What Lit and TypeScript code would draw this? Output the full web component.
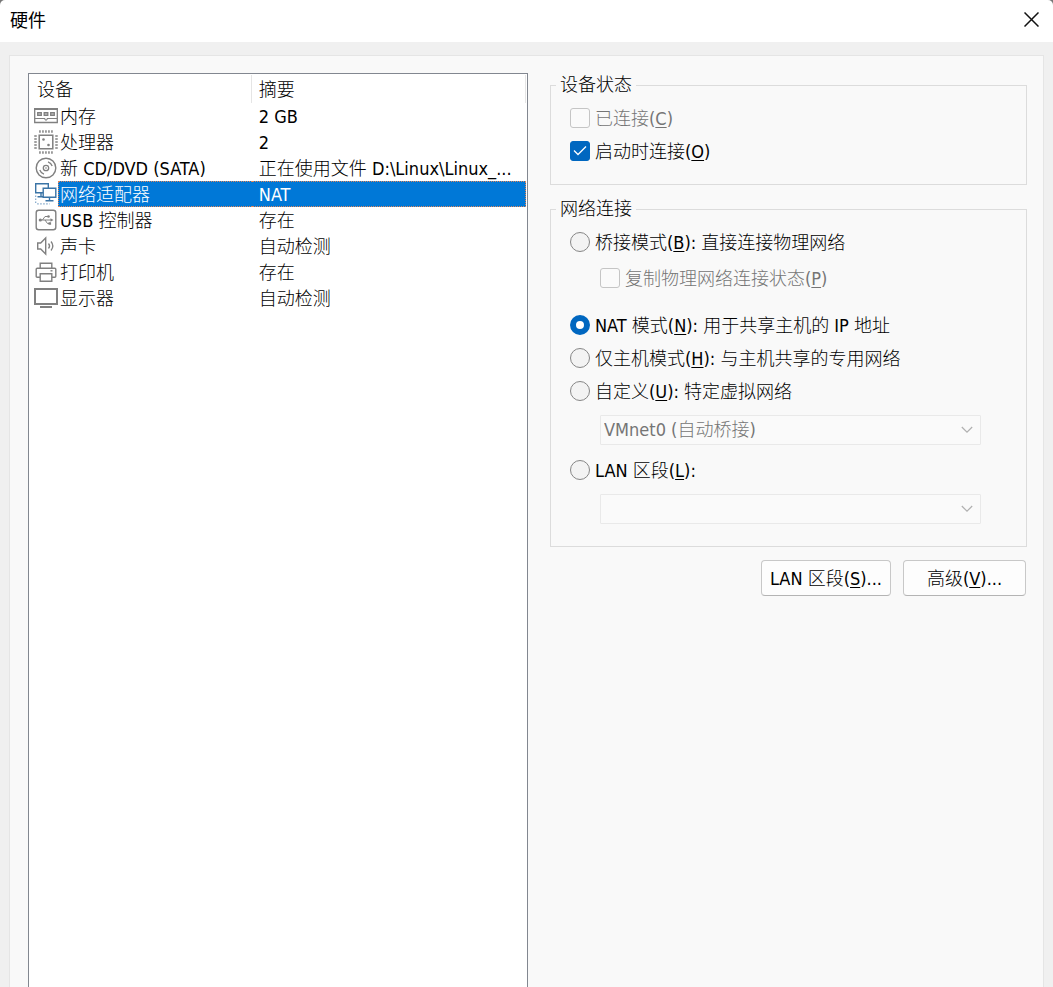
import { LitElement, html, css, svg, type TemplateResult } from "lit";
import { customElement, state } from "lit/decorators.js";

interface Device {
  id: string;
  name: string;
  summary: string;
  icon: TemplateResult;
}

const icon = (body: TemplateResult) => html`
  <svg class="icon" viewBox="0 0 24 24" width="24" height="24" fill="none" stroke="#808080" aria-hidden="true">${body}</svg>
`;

const devices: Device[] = [
  {
    id: "memory",
    name: "内存",
    summary: "2 GB",
    icon: icon(svg`
      <path fill="#808080" stroke="none" d="M0 4h24v2H0z"/>
      <path d="M.7 5v13.500h22.600V5" stroke-width="1.300"/>
      <path d="M1 14.500h10v1.500h2v-1.500h10"/>
      <path stroke-width="1.300" fill="#b8b8b8" d="M3.700 8.700h3.600v2.600H3.700zM10.200 8.700h3.600v2.600h-3.600zM16.700 8.700h3.600v2.600h-3.600z"/>`),
  },
  {
    id: "cpu",
    name: "处理器",
    summary: "2",
    icon: icon(svg`
      <path stroke-width="1.500" d="M5.200 5.200h13.600v13.600H5.200z"/>
      <path stroke-width="2.500" stroke-dasharray="1.500 1.500" d="M5.200 1.500h13.600M5.200 22.500h13.600M1.500 5.200v13.600M22.500 5.200v13.600"/>
      <circle cx="9.500" cy="9.500" r="1.300" fill="#808080" stroke="none"/>
      <circle cx="14.500" cy="15" r="1.300" fill="#808080" stroke="none"/>`),
  },
  {
    id: "cd",
    name: "新 CD/DVD (SATA)",
    summary: "正在使用文件 D:\\Linux\\Linux_...",
    icon: icon(svg`
      <circle cx="12" cy="12" r="9.800" stroke-width="1.400"/>
      <circle cx="12" cy="12" r="2.700" stroke-width="1.300"/>
      <circle cx="12" cy="12" r=".800" fill="#808080" stroke="none"/>
      <path stroke-width="1.300" d="M14 5.800c2 .7 3.500 2.200 4.200 4.200M10 18.200c-2-.7-3.500-2.200-4.200-4.200"/>`),
  },
  {
    id: "net",
    name: "网络适配器",
    summary: "NAT",
    icon: icon(svg`
      <g stroke="#3b74a6" stroke-width="1.400">
        <path fill="#fff" d="M1.700 1.700h12.600v9.100H1.700z"/>
        <path d="M7 11v3.500M3.500 14.700h6"/>
        <path fill="#fff" d="M9.200 6.200h12.600v9.100H9.200z"/>
        <path d="M15.500 15.500v3M11.500 18.800h8"/>
        <path stroke-width="1.200" stroke-dasharray="1.500 1.500" stroke="#7fa6c8" d="M1.700 13.500v8.500M3.200 21.800h12.500"/>
      </g>`),
  },
  {
    id: "usb",
    name: "USB 控制器",
    summary: "存在",
    icon: icon(svg`
      <rect x="2.200" y="2.200" width="19.600" height="19.600" rx="2.500" stroke-width="1.400"/>
      <path d="M6 12h12M8.500 12l2.500-3.500h3M11 12l2.500 3.500h2"/>
      <circle cx="6.300" cy="12" r="1.600" fill="#808080" stroke="none"/>
      <circle cx="14.500" cy="8.500" r="1.300" fill="#808080" stroke="none"/>
      <path fill="#808080" stroke="none" d="M14.500 14.200h2.600v2.600h-2.600zM16.500 10.300l3 1.700-3 1.700z"/>`),
  },
  {
    id: "sound",
    name: "声卡",
    summary: "自动检测",
    icon: icon(svg`
      <path stroke-width="1.400" d="M3.700 9v6h3l5 5V4l-5 5z"/>
      <path stroke-width="1.300" d="M14.500 9.500c1.300 1.500 1.300 3.500 0 5M17 7.500c2.300 2.800 2.300 6.200 0 9"/>`),
  },
  {
    id: "printer",
    name: "打印机",
    summary: "存在",
    icon: icon(svg`
      <g stroke-width="1.400">
        <path d="M6.200 8V3.200h11.600V8"/>
        <path d="M6 17.300H3.200q-1 0-1-1V9.200q0-1 1-1h17.600q1 0 1 1v7.100q0 1-1 1H18"/>
        <path d="M6.200 13.700h11.600v7.500H6.200z"/>
        <path d="M16.500 10.800h2"/>
      </g>`),
  },
  {
    id: "display",
    name: "显示器",
    summary: "自动检测",
    icon: icon(svg`
      <path stroke-width="2" d="M1 3h22v15H1z"/>
      <path fill="#808080" stroke="none" d="M6 20h12v2H6z"/>`),
  },
];

@customElement("app-root")
export class AppRoot extends LitElement {
  @state() private selected = "net";

  static styles = css`
    :host {
      display: flex;
      flex-direction: column;
      box-sizing: border-box;
      min-height: 100vh;
      background: #f0f0f0;
      color: #000;
      font: 300 18px/24px "DejaVu Sans Condensed", "Noto Sans CJK SC", sans-serif;
    }
    *, *::before { box-sizing: border-box; }
    .corner { background: #777; }
    .titlebar {
      display: flex;
      align-items: center;
      justify-content: space-between;
      height: 42px;
      padding: 0 10px;
      background: #fff;
      border-radius: 5px 5px 0 0;
    }
    .title {
      margin: 0;
      padding-bottom: 4px;
      font: 18px/24px "Noto Sans CJK SC", sans-serif;
    }
    .close {
      display: flex;
      padding: 0 4px 4px;
      border: 0;
      background: none;
    }
    .panel {
      flex: 1;
      display: grid;
      grid-template-columns: 500fr 477fr;
      gap: 22px;
      margin: 13px 9px 0;
      padding: 17px 16px 0 18px;
      border: 1px solid #e5e5e5;
      border-bottom: 0;
      background: #f9f9f9;
    }
    .list {
      padding: 1px 1px 0 0;
      border: 1px solid #828790;
      border-bottom: 0;
      background: #fff;
    }
    table {
      width: 100%;
      table-layout: fixed;
      border-collapse: separate;
      border-spacing: 0;
    }
    .col-icon { width: 29px; }
    .col-name { width: 39%; }
    th, td {
      padding: 2px 0 0;
      font-weight: inherit;
      line-height: 22px;
      text-align: left;
      white-space: nowrap;
      overflow: hidden;
    }
    th {
      height: 28px;
      padding-left: 8px;
      border-right: 1px solid #e5e5e5;
    }
    th + th { padding-left: 7px; }
    td {
      height: 26px;
      border: 1px solid transparent;
      border-width: 1px 0;
    }
    .icon-cell { padding: 0 0 0 5px; border: 0; }
    .name { padding-left: 2px; }
    .summary { padding-left: 7px; }
    .selected .name, .selected .summary {
      background: #0078d7;
      border-color: #e0875a;
      border-style: dotted;
      color: #fff;
    }
    .selected .name { border-left-width: 1px; padding-left: 1px; }
    .selected .summary { border-right-width: 1px; }
    .icon { display: block; }
    fieldset {
      min-width: 0;
      margin: 0 0 12px;
      padding: 5px 5px 16px;
      border: 1px solid #dcdcdc;
    }
    .network { padding-bottom: 22px; margin-bottom: 13px; }
    legend { padding: 0 4px; }
    .option {
      display: flex;
      align-items: center;
      gap: 5px;
      height: 33px;
      padding: 0 0 1px 14px;
      white-space: nowrap;
    }
    .option span { padding-top: 1px; }
    .nested { margin: 3px 0 14px; padding-left: 44px; }
    .disabled { color: #757575; }
    input {
      appearance: none;
      flex: none;
      width: 20px;
      height: 20px;
      margin: 0;
      border: 1px solid #868686;
      border-radius: 3px;
      background: #f3f3f3;
    }
    input[type="radio"] { border-radius: 50%; }
    input:disabled { border-color: #c5c5c5; background: #fafafa; }
    input[type="checkbox"]:checked {
      border-color: #0067c0;
      background: #0067c0 url("data:image/svg+xml,%3Csvg xmlns='http://www.w3.org/2000/svg' viewBox='0 0 18 18'%3E%3Cpath d='M3 8.500l4 4 8-8' fill='none' stroke='%23fff' stroke-width='1.300'/%3E%3C/svg%3E") center / 18px no-repeat;
    }
    input[type="radio"]:checked { border: 6px solid #0067c0; background: #fff; }
    u { text-decoration: underline; text-decoration-thickness: 1px; text-underline-offset: 2px; }
    .select-row { display: flex; margin: 7px 40px 9px 44px; }
    .select-row:last-child { margin-bottom: 0; }
    select {
      appearance: none;
      flex: 1;
      min-width: 0;
      height: 30px;
      padding: 0 28px 0 3px;
      border: 1px solid #e9e9e9;
      border-radius: 1px;
      font: inherit;
      color: #757575;
      opacity: 1;
      background: #fafafa url("data:image/svg+xml,%3Csvg xmlns='http://www.w3.org/2000/svg' viewBox='0 0 12 8'%3E%3Cpath d='M.800 1l5.200 5.200L11.200 1' fill='none' stroke='%23b0b0b0' stroke-width='1.200'/%3E%3C/svg%3E") right 7px center / 12px 8px no-repeat;
    }
    .actions { display: flex; justify-content: flex-end; gap: 12px; padding-right: 1px; }
    .action {
      min-width: 123px;
      height: 36px;
      padding: 1px 8px 0;
      border: 1px solid #c8c8c8;
      border-bottom-color: #b4b4b4;
      border-radius: 4px;
      background: #fdfdfd;
      color: #000;
      font: inherit;
      white-space: nowrap;
    }
  `;

  render() {
    return html`
      <div class="corner">
        <header class="titlebar">
          <h1 class="title">硬件</h1>
          <button class="close" aria-label="关闭">
            <svg width="15" height="15" viewBox="0 0 15 15" fill="none" stroke="#111" stroke-width="1.500" aria-hidden="true">
              <path d="M.5.5l14 14M14.500.5l-14 14" />
            </svg>
          </button>
        </header>
      </div>
      <main class="panel">
        <div class="list">
          <table>
            <colgroup><col class="col-icon" /><col class="col-name" /><col /></colgroup>
            <thead>
              <tr><th colspan="2" scope="col">设备</th><th scope="col">摘要</th></tr>
            </thead>
            <tbody>
              ${devices.map((d) => html`
                <tr class=${d.id === this.selected ? "selected" : ""} @click=${() => (this.selected = d.id)}>
                  <td class="icon-cell">${d.icon}</td>
                  <td class="name">${d.name}</td>
                  <td class="summary">${d.summary}</td>
                </tr>`)}
            </tbody>
          </table>
        </div>
        <div>
          <fieldset>
            <legend>设备状态</legend>
            <label class="option disabled"><input type="checkbox" disabled /><span>已连接(<u>C</u>)</span></label>
            <label class="option"><input type="checkbox" checked /><span>启动时连接(<u>O</u>)</span></label>
          </fieldset>
          <fieldset class="network">
            <legend>网络连接</legend>
            <label class="option"><input type="radio" name="mode" /><span>桥接模式(<u>B</u>): 直接连接物理网络</span></label>
            <label class="option nested disabled"><input type="checkbox" disabled /><span>复制物理网络连接状态(<u>P</u>)</span></label>
            <label class="option"><input type="radio" name="mode" checked /><span>NAT 模式(<u>N</u>): 用于共享主机的 IP 地址</span></label>
            <label class="option"><input type="radio" name="mode" /><span>仅主机模式(<u>H</u>): 与主机共享的专用网络</span></label>
            <label class="option"><input type="radio" name="mode" /><span>自定义(<u>U</u>): 特定虚拟网络</span></label>
            <div class="select-row">
              <select disabled aria-label="特定虚拟网络"><option>VMnet0 (自动桥接)</option></select>
            </div>
            <label class="option"><input type="radio" name="mode" /><span>LAN 区段(<u>L</u>):</span></label>
            <div class="select-row">
              <select disabled aria-label="LAN 区段"></select>
            </div>
          </fieldset>
          <div class="actions">
            <button class="action">LAN 区段(<u>S</u>)...</button>
            <button class="action">高级(<u>V</u>)...</button>
          </div>
        </div>
      </main>
    `;
  }
}
